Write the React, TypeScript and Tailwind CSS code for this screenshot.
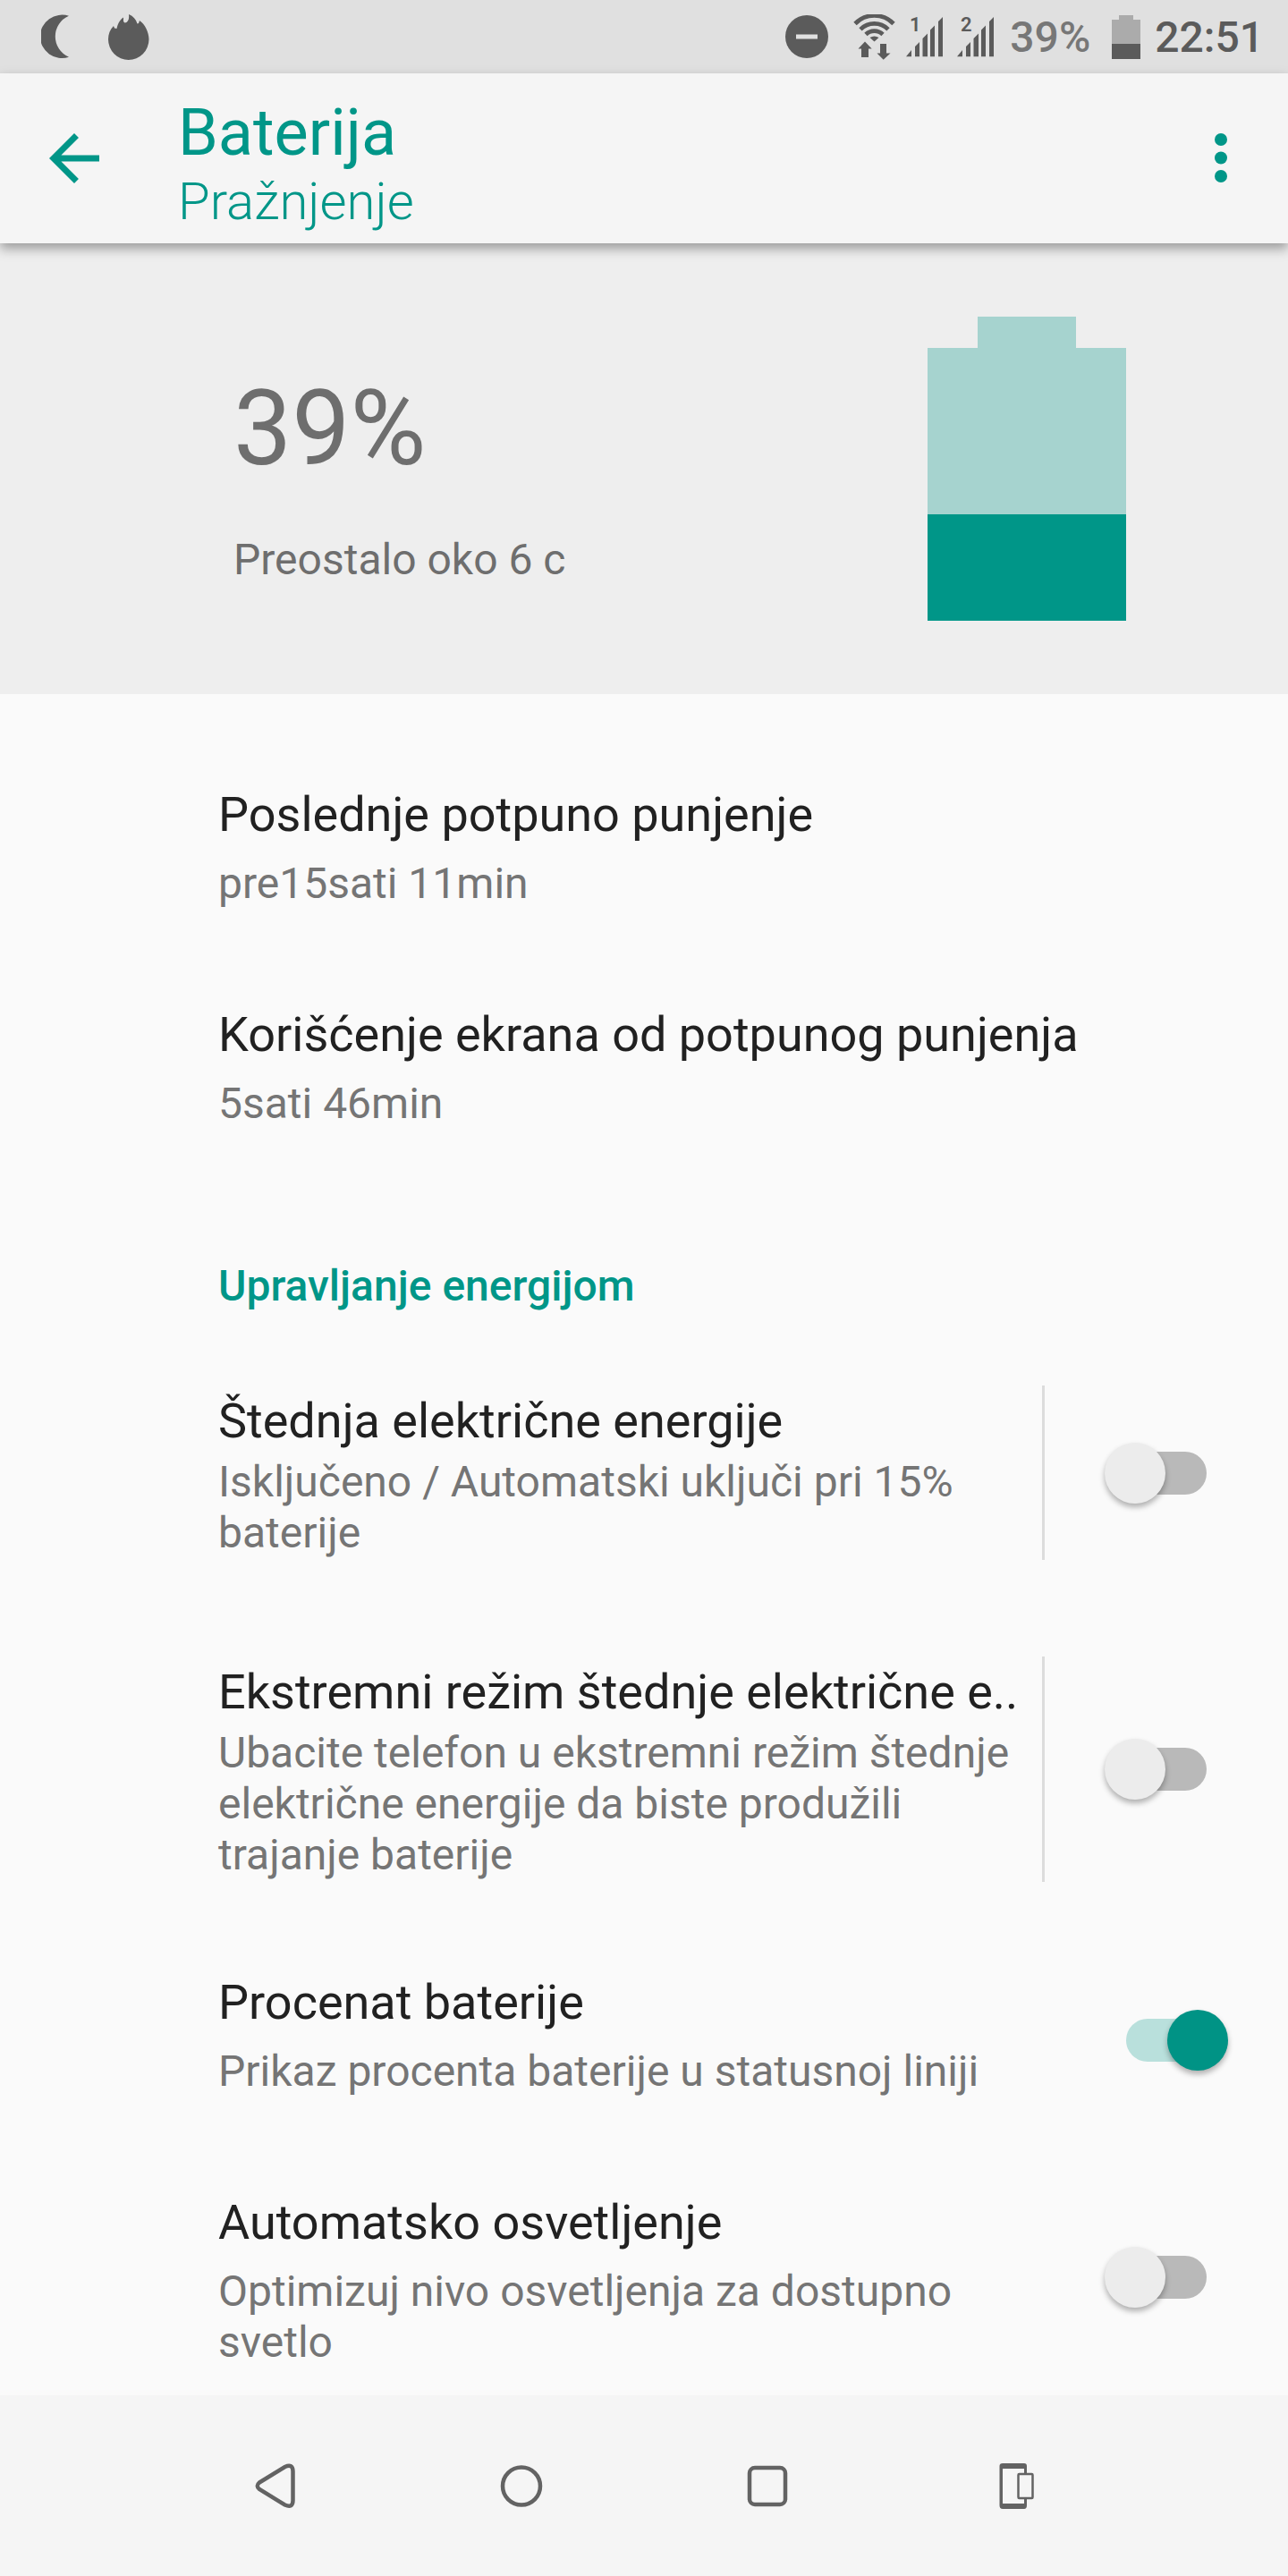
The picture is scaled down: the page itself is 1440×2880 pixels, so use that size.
import { useState } from "react";
import type { ReactNode } from "react";

type SwitchProps = {
  checked: boolean;
  onChange: () => void;
  labelId: string;
};

function Switch({ checked, onChange, labelId }: SwitchProps) {
  return (
    <span className="relative flex h-[68px] w-[138px] shrink-0 items-center justify-center">
      <input
        type="checkbox"
        role="switch"
        aria-labelledby={labelId}
        checked={checked}
        onChange={onChange}
        className="peer absolute inset-0 z-10 h-full w-full cursor-pointer appearance-none"
      />
      <span className="h-12 w-[90px] rounded-full bg-[#b9b9b9] peer-checked:bg-[#b9e0dc]" />
      <span className="absolute left-0 top-0 h-[68px] w-[68px] rounded-full bg-[#ececec] shadow-[0_4px_6px_rgba(0,0,0,0.3)] peer-checked:left-auto peer-checked:right-0 peer-checked:bg-[#009385]" />
    </span>
  );
}

function Title({ id, children }: { id?: string; children: ReactNode }) {
  return (
    <h3 id={id} className="whitespace-nowrap text-[54px] leading-[64px] text-[#212121]">
      {children}
    </h3>
  );
}

function Summary({ children }: { children: ReactNode }) {
  return <p className="text-[48px] leading-[57px] text-[#757575]">{children}</p>;
}

type RowProps = {
  id: string;
  title: string;
  summary: string;
  children?: ReactNode;
};

function Row({ id, title, summary, children }: RowProps) {
  return (
    <div className="flex min-h-[246px] items-center gap-[54px] pl-[244px] pr-[67px]">
      <div className="flex min-w-0 flex-1 flex-col gap-4 self-start pb-[41px] pt-[49px]">
        <Title id={id}>{title}</Title>
        <Summary>{summary}</Summary>
      </div>
      {children}
    </div>
  );
}

// linha com divisor vertical antes do switch
function SplitRow({ id, title, summary, children }: RowProps) {
  return (
    <div className="py-[54px] pl-[244px] pr-[67px]">
      <div className="flex items-center">
        <div className="flex min-w-0 flex-1 flex-col gap-[7px] border-r-[3px] border-[#dcdcdc] pb-[2px] pr-6 pt-2">
          <Title id={id}>{title}</Title>
          <Summary>{summary}</Summary>
        </div>
        <div className="pl-[67px]">{children}</div>
      </div>
    </div>
  );
}

function Signal({ sim }: { sim: string }) {
  return (
    <svg className="overflow-visible" width="41" height="45" viewBox="0 0 41 45" fill="currentColor">
      <path d="M0 44.300L6 37V44.300ZM10 33L15 28V44.300H10ZM18.500 24L24 18.500V44.300H18.500ZM27 14.500L32 9.500V44.300H27ZM36 5L41 0V44.300H36Z" />
      <text x="4" y="16" fontSize="22" fontWeight="600">
        {sim}
      </text>
    </svg>
  );
}

function StatusBar() {
  return (
    <div className="flex h-[82px] shrink-0 items-center justify-between bg-[#e0e0e0] pl-[46px] pr-[27px] text-[#5b5b5b]">
      <div className="flex items-center gap-11">
        <svg width="31" height="50" viewBox="0 0 31 50" fill="currentColor">
          <path d="M31 1.800A24.500 24.200 0 1 0 31 47.800A25 25 0 0 1 31 1.800Z" />
        </svg>
        <svg width="46" height="51" viewBox="0 0 46 51" fill="currentColor">
          <path d="M0 28C0 22 2 17 6 13L7 15.500L9.500 16C10.500 11 13 6 17 3.500V8L18.500 9.500L20.500 9C23 7 23.500 4 23 0C28 2 31 5.500 32.500 10.500L34 10L35 7C41 11 45.500 20 45.500 28A22.750 23 0 0 1 0 28Z" />
        </svg>
      </div>

      <div className="flex items-center">
        <svg className="mr-7" width="48" height="48" viewBox="0 0 48 48">
          <circle cx="24" cy="24" r="24" fill="currentColor" />
          <path d="M12 21.500H36V26.500H12Z" fill="#e0e0e0" />
        </svg>
        <svg className="mr-3" width="47" height="51" viewBox="0 0 47 51">
          <g fill="none" stroke="currentColor" strokeWidth="4.700">
            <path d="M2 10.500A30 30 0 0 1 45 10.500" />
            <path d="M8 16.800A22 22 0 0 1 39 16.800" />
            <path d="M14 22.500A13.500 13.500 0 0 1 33 22.500" />
          </g>
          <path
            fill="currentColor"
            d="M23.500 30.500L18.500 26Q23.500 23 28.500 26ZM13 30.500L20.700 38.500H17V48H9V38.500H5.500ZM30 33H37V43.500H41.500L33.700 50.700L26.500 43.500H30Z"
          />
        </svg>
        <Signal sim="1" />
        <span className="w-4" />
        <Signal sim="2" />
        <span className="ml-[18px] text-[48px] font-medium leading-[57px] text-[#777777]">39%</span>
        <svg className="ml-6 mr-4" width="32" height="49" viewBox="0 0 32 49">
          <path d="M8 0H24V5H32V32H0V5H8Z" fill="#ababab" />
          <path d="M0 32H32V49H0Z" fill="currentColor" />
        </svg>
        <span className="text-[48px] font-medium leading-[57px]">22:51</span>
      </div>
    </div>
  );
}

function AppBar() {
  return (
    <header className="z-10 flex h-[190px] shrink-0 items-center bg-[#f5f5f5] pl-[41px] pr-[33px] text-[#009688] shadow-[0_6px_12px_rgba(0,0,0,0.35)]">
      <button type="button" aria-label="Nazad">
        <svg width="84" height="84" viewBox="0 0 24 24" fill="currentColor">
          <path d="M20 11H7.830l5.590-5.590L12 4l-8 8 8 8 1.410-1.410L7.830 13H20v-2z" />
        </svg>
      </button>
      <div className="flex-1 pl-[74px] pt-[11px]">
        <h1 className="text-[72px] leading-[84px]">Baterija</h1>
        <h2 className="text-[58px] font-light leading-[68px]">Pražnjenje</h2>
      </div>
      <button type="button" aria-label="Još opcija">
        <svg width="84" height="84" viewBox="0 0 84 84" fill="currentColor">
          <circle cx="42" cy="21" r="7" />
          <circle cx="42" cy="41.500" r="7" />
          <circle cx="42" cy="62" r="7" />
        </svg>
      </button>
    </header>
  );
}

function NavBar() {
  return (
    <nav className="grid h-[202px] shrink-0 grid-cols-4 items-center justify-items-center bg-[#f5f5f5] px-[170px] text-[#636363]">
      <button type="button" aria-label="Nazad">
        <svg width="54" height="54" viewBox="0 0 54 54" fill="none" stroke="currentColor" strokeWidth="4.500">
          <path d="M9 23.500L37.500 6Q46.500 2 46.500 11V43.500Q46.500 52.500 37.500 48.500L9 31Q4.500 27.250 9 23.500Z" />
        </svg>
      </button>
      <button type="button" aria-label="Početna">
        <svg width="54" height="54" viewBox="0 0 54 54" fill="none" stroke="currentColor" strokeWidth="4.500">
          <circle cx="27" cy="27.500" r="21" />
        </svg>
      </button>
      <button type="button" aria-label="Nedavno">
        <svg width="54" height="54" viewBox="0 0 54 54" fill="none" stroke="currentColor" strokeWidth="4.500">
          <rect x="7" y="7" width="40" height="41" rx="6" />
        </svg>
      </button>
      <button type="button" aria-label="Jednom rukom">
        <svg width="54" height="54" viewBox="0 0 54 54">
          <path
            fill="currentColor"
            fillRule="evenodd"
            d="M15 2H39Q42 2 42 5V49Q42 53 39 53H15Q11.500 53 11.500 49V5Q11.500 2 15 2ZM15 8V47H39V8Z"
          />
          <rect x="32.500" y="14" width="16" height="27" rx="1" fill="#f5f5f5" stroke="currentColor" strokeWidth="2.500" />
        </svg>
      </button>
    </nav>
  );
}

export default function App() {
  const [stednja, setStednja] = useState(false);
  const [ekstremni, setEkstremni] = useState(false);
  const [procenat, setProcenat] = useState(true);
  const [osvetljenje, setOsvetljenje] = useState(false);

  return (
    <div className="flex h-screen flex-col overflow-hidden bg-[#fafafa] font-[Roboto,sans-serif]">
      <StatusBar />
      <AppBar />

      <main className="min-h-0 flex-1 overflow-y-auto [scrollbar-width:none]">
        {/* Nivo baterije */}
        <section className="flex items-center justify-between bg-[#eeeeee] py-[82px] pl-[261px] pr-[181px] text-[#6e6e6e]">
          <div className="flex flex-col gap-[50px] pt-4">
            <div className="text-[116px] leading-[136px]">39%</div>
            <div className="text-[48px] leading-[57px]">Preostalo oko 6 c</div>
          </div>
          <svg width="222" height="340" viewBox="0 0 222 340">
            <path d="M56 0H166V35H222V221H0V35H56Z" fill="#a6d3cf" />
            <path d="M0 221H222V340H0Z" fill="#009688" />
          </svg>
        </section>

        <div className="pt-[54px]">
          <Row id="punjenje" title="Poslednje potpuno punjenje" summary="pre15sati 11min" />
          <Row id="ekran" title="Korišćenje ekrana od potpunog punjenja" summary="5sati 46min" />
        </div>

        {/* Upravljanje energijom */}
        <h2 className="pb-[29px] pl-[244px] pt-[87px] text-[48px] font-medium leading-[57px] text-[#009688]">
          Upravljanje energijom
        </h2>
        <SplitRow
          id="stednja"
          title="Štednja električne energije"
          summary="Isključeno / Automatski uključi pri 15% baterije"
        >
          <Switch labelId="stednja" checked={stednja} onChange={() => setStednja(!stednja)} />
        </SplitRow>
        <SplitRow
          id="ekstremni"
          title="Ekstremni režim štednje električne e.."
          summary="Ubacite telefon u ekstremni režim štednje električne energije da biste produžili trajanje baterije"
        >
          <Switch labelId="ekstremni" checked={ekstremni} onChange={() => setEkstremni(!ekstremni)} />
        </SplitRow>
        <Row id="procenat" title="Procenat baterije" summary="Prikaz procenta baterije u statusnoj liniji">
          <Switch labelId="procenat" checked={procenat} onChange={() => setProcenat(!procenat)} />
        </Row>
        <Row
          id="osvetljenje"
          title="Automatsko osvetljenje"
          summary="Optimizuj nivo osvetljenja za dostupno svetlo"
        >
          <Switch labelId="osvetljenje" checked={osvetljenje} onChange={() => setOsvetljenje(!osvetljenje)} />
        </Row>
      </main>

      <NavBar />
    </div>
  );
}
